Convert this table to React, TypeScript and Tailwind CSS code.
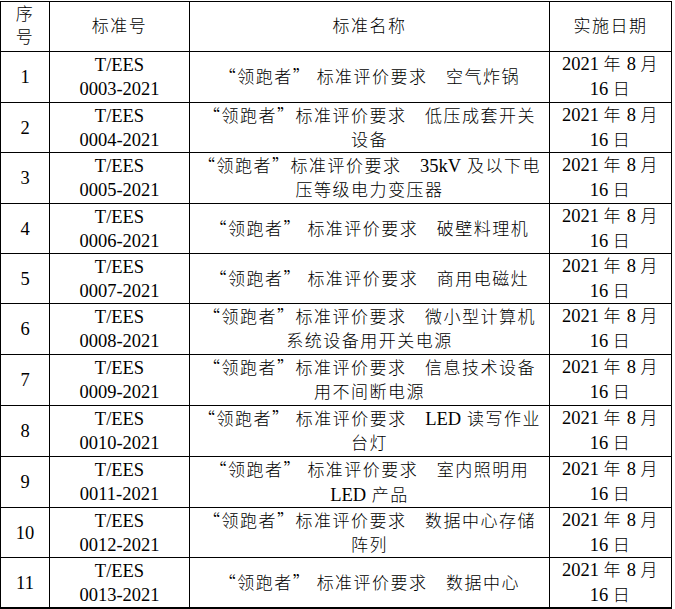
import React from "react";

type Row = {
  no: string;
  code: string;
  sp: boolean;
  name: string[];
  h: number;
};

const rows: Row[] = [
  { no: "1", code: "0003-2021", sp: true, name: ["标准评价要求　空气炸锅"], h: 51 },
  { no: "2", code: "0004-2021", sp: false, name: ["标准评价要求　低压成套开关", "设备"], h: 50 },
  { no: "3", code: "0005-2021", sp: false, name: ["标准评价要求　35kV 及以下电", "压等级电力变压器"], h: 51 },
  { no: "4", code: "0006-2021", sp: true, name: ["标准评价要求　破壁料理机"], h: 50 },
  { no: "5", code: "0007-2021", sp: true, name: ["标准评价要求　商用电磁灶"], h: 50 },
  { no: "6", code: "0008-2021", sp: false, name: ["标准评价要求　微小型计算机", "系统设备用开关电源"], h: 51 },
  { no: "7", code: "0009-2021", sp: false, name: ["标准评价要求　信息技术设备", "用不间断电源"], h: 51 },
  { no: "8", code: "0010-2021", sp: true, name: ["标准评价要求　LED 读写作业", "台灯"], h: 51 },
  { no: "9", code: "0011-2021", sp: true, name: ["标准评价要求　室内照明用", "LED 产品"], h: 51 },
  { no: "10", code: "0012-2021", sp: false, name: ["标准评价要求　数据中心存储", "阵列"], h: 50 },
  { no: "11", code: "0013-2021", sp: true, name: ["标准评价要求　数据中心"], h: 51 },
];

const cell =
  "flex flex-col items-center justify-center text-center border-r border-b border-black whitespace-nowrap";

const cjk = "text-[17px] tracking-[1.5px] font-light";

function Mixed({ text }: { text: string }) {
  const parts = text.split(/([A-Za-z0-9]+)/);
  return (
    <>
      {parts.map((p, k) =>
        /^[A-Za-z0-9]+$/.test(p) ? (
          <span key={k} className="text-[18.5px] tracking-normal font-normal">
            {p}
          </span>
        ) : (
          <React.Fragment key={k}>{p}</React.Fragment>
        )
      )}
    </>
  );
}

export default function App() {
  return (
    <div className="w-[675px] h-[609px] bg-white text-black">
      <div
        lang="zh-CN"
        className="mt-[1px] w-[672px] border-l border-t border-black grid grid-cols-[49px_140px_360px_122px] font-['Liberation_Serif','Noto_Sans_CJK_SC',serif] text-[18.5px] leading-[24px]"
      >
        <div className={`${cell} h-[50px] ${cjk}`}>
          <div>序</div>
          <div className="mt-[-1px]">号</div>
        </div>
        <div className={`${cell} h-[50px] ${cjk}`}>标准号</div>
        <div className={`${cell} h-[50px] ${cjk}`}>标准名称</div>
        <div className={`${cell} h-[50px] ${cjk}`}>实施日期</div>
        {rows.map((r, i) => {
          const last = i === rows.length - 1;
          const hc = last ? "border-b-2" : "";
          const style = { height: r.h };
          return (
            <React.Fragment key={r.no}>
              <div className={`${cell} ${hc}`} style={style}>
                {r.no}
              </div>
              <div className={`${cell} ${hc}`} style={style}>
                <div>T/EES</div>
                <div>{r.code}</div>
              </div>
              <div className={`${cell} ${hc} ${cjk}`} style={style}>
                {r.name.map((line, j) => (
                  <div key={j}>
                    {j === 0 && (
                      <span className="font-['Noto_Sans_CJK_SC']">
                        “领跑者”{r.sp ? " " : ""}
                      </span>
                    )}
                    <Mixed text={line} />
                  </div>
                ))}
              </div>
              <div className={`${cell} ${hc}`} style={style}>
                <div>
                  2021 <span className={cjk}>年</span> 8{" "}
                  <span className={cjk}>月</span>
                </div>
                <div>
                  16 <span className={cjk}>日</span>
                </div>
              </div>
            </React.Fragment>
          );
        })}
      </div>
    </div>
  );
}
